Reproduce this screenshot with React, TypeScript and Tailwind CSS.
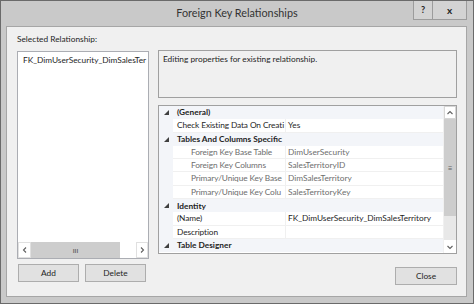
type Row = { cat?: boolean; label: string; value?: string; dim?: boolean }

const rows: Row[] = [
  { cat: true, label: '(General)' },
  { label: 'Check Existing Data On Creati', value: 'Yes' },
  { cat: true, label: 'Tables And Columns Specific' },
  { label: 'Foreign Key Base Table', value: 'DimUserSecurity', dim: true },
  { label: 'Foreign Key Columns', value: 'SalesTerritoryID', dim: true },
  { label: 'Primary/Unique Key Base', value: 'DimSalesTerritory', dim: true },
  { label: 'Primary/Unique Key Colu', value: 'SalesTerritoryKey', dim: true },
  { cat: true, label: 'Identity' },
  { label: '(Name)', value: 'FK_DimUserSecurity_DimSalesTerritory' },
  { label: 'Description', value: '' },
  { cat: true, label: 'Table Designer' },
]

function Chevron({ dir }: { dir: 'up' | 'down' | 'left' | 'right' }) {
  const d = {
    up: 'M1.5 5 L4 2.5 L6.5 5',
    down: 'M1.5 3 L4 5.5 L6.5 3',
    left: 'M5 1.5 L2.5 4 L5 6.5',
    right: 'M3 1.5 L5.5 4 L3 6.5',
  }[dir]
  return (
    <svg width="8" height="8" viewBox="0 0 8 8">
      <path d={d} fill="none" stroke="#606060" strokeWidth="1.1" />
    </svg>
  )
}

function Expander() {
  return (
    <svg width="5" height="5" viewBox="0 0 5 5">
      <polygon points="5,0 5,5 0,5" fill="#404040" />
    </svg>
  )
}

function Button({ label, w }: { label: string; w: string }) {
  return (
    <div className={`${w} h-[18px] flex items-center justify-center bg-[#e1e1e1] border border-[#adadad] text-[#1e1e1e]`}>
      {label}
    </div>
  )
}

export default function App() {
  return (
    <div
      className="w-[474px] h-[304px] border border-[#6a6a6a] bg-[#c9c9c9] flex flex-col text-[8.3px] text-[#1e1e1e]"
      style={{ fontFamily: 'Lato, "Noto Sans", sans-serif' }}
    >
      {/* Title bar */}
      <div className="relative h-[25px] flex items-center justify-center">
        <span className="text-[10.8px] text-[#333]">Foreign Key Relationships</span>
        <div className="absolute right-[6px] top-0 flex">
          <div className="w-[20px] h-[19px] flex items-center justify-center border border-t-0 border-[#9c9c9c] bg-[#d3d3d3] font-bold text-[9px] text-[#222]">?</div>
          <div className="w-[34px] h-[19px] flex items-center justify-center border border-t-0 border-l-0 border-[#9c9c9c] bg-[#d3d3d3] font-bold text-[10px] text-[#222]">x</div>
        </div>
      </div>

      {/* Client area */}
      <div className="flex-1 ml-[5px] mr-[6px] mb-[6px] border border-[#a6a6a6] bg-[#f0f0f0] flex gap-[9px] pl-[10px] pt-[6px]">
        {/* Left column */}
        <div className="w-[132px] flex flex-col">
          <div className="h-[12px] leading-[12px]">Selected Relationship:</div>
          <div className="mt-[6px] h-[208px] border border-[#abadb3] bg-white flex flex-col">
            <div className="flex-1 pl-[5px] pt-[2px] whitespace-nowrap overflow-hidden">FK_DimUserSecurity_DimSalesTer</div>
            <div className="h-[16px] flex items-stretch bg-[#f0f0f0]">
              <div className="w-[13px] flex items-center justify-center bg-white border border-[#e0e0e0]"><Chevron dir="left" /></div>
              <div className="w-[89px] flex items-center justify-center bg-[#cdcdcd] text-[6px] font-bold text-[#606060]">III</div>
              <div className="flex-1 bg-white" />
              <div className="w-[12px] flex items-center justify-center bg-white border border-[#e0e0e0]"><Chevron dir="right" /></div>
            </div>
          </div>
          <div className="mt-[5px] flex gap-[6px] pl-px">
            <Button label="Add" w="w-[61px]" />
            <Button label="Delete" w="w-[61px]" />
          </div>
        </div>

        {/* Right column */}
        <div className="w-[299px] flex flex-col pt-[17px]">
          <div className="h-[48px] border border-[#a0a0a0] bg-[#f0f0f0] pl-[4px] pt-[2px]">
            Editing properties for existing relationship.
          </div>
          <div className="mt-[7px] h-[149px] border border-[#a0a0a0] bg-white flex">
            <div className="flex-1 flex flex-col">
              {rows.map((r) => (
                <div key={r.label} className="h-[13.3px] flex items-stretch">
                  <div className="w-[14px] bg-[#f3f5f9] flex items-center justify-center">
                    {r.cat && <Expander />}
                  </div>
                  {r.cat ? (
                    <div className="flex-1 bg-[#f3f5f9] pl-[4px] font-bold flex items-center whitespace-nowrap">{r.label}</div>
                  ) : (
                    <>
                      <div
                        className={`w-[112px] border-b border-[#f0f0f0] flex items-center whitespace-nowrap tracking-[-0.1px] ${r.dim ? 'pl-[18px] text-[#6d6d6d]' : 'pl-[4px]'}`}
                      >
                        {r.label}
                      </div>
                      <div
                        className={`flex-1 border-b border-l border-[#f0f0f0] pl-[2px] flex items-center whitespace-nowrap ${r.dim ? 'text-[#6d6d6d]' : ''}`}
                      >
                        {r.value}
                      </div>
                    </>
                  )}
                </div>
              ))}
            </div>
            {/* Vertical scrollbar */}
            <div className="w-[13px] bg-[#e8e8e8] flex flex-col border-l border-[#f0f0f0]">
              <div className="h-[13px] bg-white border border-[#d6d6d6] flex items-center justify-center"><Chevron dir="up" /></div>
              <div className="h-[97px] bg-[#cdcdcd] flex items-center justify-center text-[8px] text-[#606060]">≡</div>
              <div className="flex-1" />
              <div className="h-[13px] bg-white flex items-center justify-center"><Chevron dir="down" /></div>
            </div>
          </div>
          <div className="mt-[13px] flex justify-end">
            <Button label="Close" w="w-[62px]" />
          </div>
        </div>
      </div>
    </div>
  )
}
